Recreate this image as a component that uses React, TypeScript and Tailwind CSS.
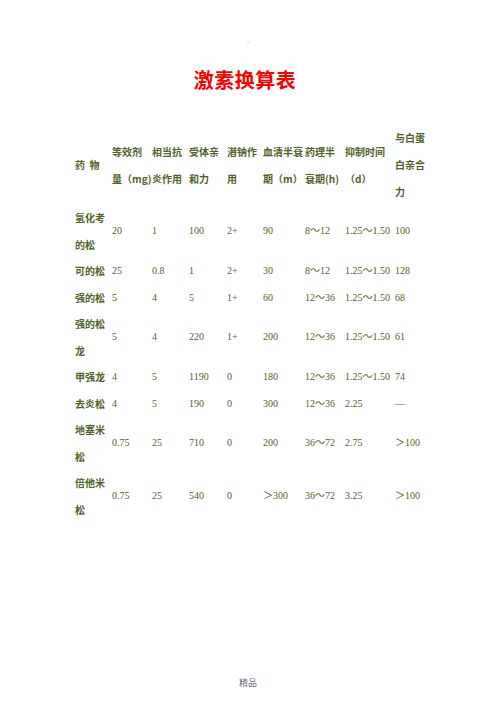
import React from "react";

const cols = "grid grid-cols-[37px_40px_37px_38px_36px_42px_40px_50px_60px]";

type Row = { name: string[]; v: string[] };

const rows: Row[] = [
  { name: ["氢化考", "的松"], v: ["20", "1", "100", "2+", "90", "8～12", "1.25～1.50", "100"] },
  { name: ["可的松"], v: ["25", "0.8", "1", "2+", "30", "8～12", "1.25～1.50", "128"] },
  { name: ["强的松"], v: ["5", "4", "5", "1+", "60", "12～36", "1.25～1.50", "68"] },
  { name: ["强的松", "龙"], v: ["5", "4", "220", "1+", "200", "12～36", "1.25～1.50", "61"] },
  { name: ["甲强龙"], v: ["4", "5", "1190", "0", "180", "12～36", "1.25～1.50", "74"] },
  { name: ["去炎松"], v: ["4", "5", "190", "0", "300", "12～36", "2.25", "—"] },
  { name: ["地塞米", "松"], v: ["0.75", "25", "710", "0", "200", "36～72", "2.75", "＞100"] },
  { name: ["倍他米", "松"], v: ["0.75", "25", "540", "0", "＞300", "36～72", "3.25", "＞100"] },
];

const headers: string[][] = [
  ["等效剂", "量（mg)"],
  ["相当抗", "炎作用"],
  ["受体亲", "和力"],
  ["潜钠作", "用"],
  ["血清半衰", "期（m）"],
  ["药理半", "衰期(h)"],
  ["抑制时间", "（d）"],
];

export default function App() {
  return (
    <div className="w-[496px] h-[702px] bg-white flex flex-col font-['Liberation_Serif','Noto_Sans_CJK_SC',serif] text-[#4f6228]">
      <div className="pt-[35px] h-[47px] flex justify-center text-[8px] leading-[12px] text-gray-500">.</div>
      <div className="mt-[21px] text-center text-[20px] leading-[24px] font-bold text-[#ff0000] tracking-[0.5px] pr-[6px] font-['Noto_Sans_CJK_SC',serif]">
        激素换算表
      </div>
      <div className="mt-[32px] pl-[75px] text-[10px] leading-[27px]">
        <div className={`${cols} items-center h-[81px]`}>
          <div className="font-bold font-['Noto_Sans_CJK_SC',serif] whitespace-pre">药  物</div>
          {headers.map((h, i) => (
            <div key={i} className="font-bold whitespace-nowrap font-['Noto_Sans_CJK_SC',serif]">
              {h.map((l, j) => (
                <div key={j}>{l}</div>
              ))}
            </div>
          ))}
          <div className="font-bold font-['Noto_Sans_CJK_SC',serif]">
            <div>与白蛋</div>
            <div>白亲合</div>
            <div>力</div>
          </div>
        </div>
        {rows.map((r, i) => (
          <div key={i} className={`${cols} items-center leading-[26.5px]`}>
            <div className="font-bold font-['Noto_Sans_CJK_SC',serif] whitespace-nowrap">
              {r.name.map((l, j) => (
                <div key={j}>{l}</div>
              ))}
            </div>
            {r.v.map((v, j) => (
              <div key={j} className="whitespace-nowrap">{v}</div>
            ))}
          </div>
        ))}
      </div>
      <div className="mt-auto pb-[12px] text-center text-[9px] leading-[14px] text-gray-500 font-['Noto_Sans_CJK_SC',serif]">
        精品
      </div>
    </div>
  );
}
